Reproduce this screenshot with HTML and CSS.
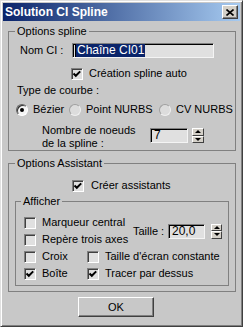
FILE: index.html
```html
<!DOCTYPE html>
<html lang="fr">
<head>
  <meta charset="UTF-8" />
  <title>Solution CI Spline</title>
  <link rel="stylesheet" href="styles.css">
</head>
<body>
  <div class="window">
    <div class="titlebar">
      <span class="title">Solution CI Spline</span>
      <span class="close">
        <svg width="8" height="7" viewBox="0 0 8 7"><path d="M0.5 0.5 L7.5 6.5 M7.5 0.5 L0.5 6.5" stroke="#000" stroke-width="1.6" fill="none"/></svg>
      </span>
    </div>

    <div class="client">
      <fieldset class="group g-spline">
        <legend>Options spline</legend>
        <div class="row row-name">
          <span class="name-label">Nom CI :</span>
          <div class="field field-name"><span class="sel">Chaîne CI01</span></div>
        </div>
        <div class="row checkrow row-auto">
          <span class="check"><svg width="10" height="10" viewBox="0 0 10 10"><path d="M1.5 4.5 L3.8 6.8 L8.2 2.4" stroke="#000" stroke-width="2" fill="none"/></svg></span>
          <span>Création spline auto</span>
        </div>
        <div class="row row-type">Type de courbe :</div>
        <div class="row row-radios">
          <span class="opt opt-bezier"><span class="radio on"></span>Bézier</span>
          <span class="opt opt-point"><span class="radio"></span>Point NURBS</span>
          <span class="opt"><span class="radio"></span>CV NURBS</span>
        </div>
        <div class="row row-knots">
          <span class="knots-label">Nombre de noeuds<br>de la spline :</span>
          <div class="field field-num">7</div>
          <div class="spin"><span class="up"></span><span class="down"></span></div>
        </div>
      </fieldset>

      <fieldset class="group g-assist">
        <legend>Options Assistant</legend>
        <div class="row checkrow row-create">
          <span class="check"><svg width="10" height="10" viewBox="0 0 10 10"><path d="M1.5 4.5 L3.8 6.8 L8.2 2.4" stroke="#000" stroke-width="2" fill="none"/></svg></span>
          <span>Créer assistants</span>
        </div>

        <fieldset class="group g-show">
          <legend>Afficher</legend>
          <div class="show-top">
            <div class="show-col">
              <div class="row checkrow"><span class="check"></span><span>Marqueur central</span></div>
              <div class="row checkrow"><span class="check"></span><span>Repère trois axes</span></div>
            </div>
            <div class="size">
              <span class="size-label">Taille :</span>
              <div class="field field-size">20,0</div>
              <div class="spin"><span class="up"></span><span class="down"></span></div>
            </div>
          </div>
          <div class="show-grid">
            <div class="row checkrow"><span class="check"></span><span>Croix</span></div>
            <div class="row checkrow"><span class="check"></span><span>Taille d'écran constante</span></div>
            <div class="row checkrow">
              <span class="check"><svg width="10" height="10" viewBox="0 0 10 10"><path d="M1.5 4.5 L3.8 6.8 L8.2 2.4" stroke="#000" stroke-width="2" fill="none"/></svg></span>
              <span>Boîte</span>
            </div>
            <div class="row checkrow">
              <span class="check"><svg width="10" height="10" viewBox="0 0 10 10"><path d="M1.5 4.5 L3.8 6.8 L8.2 2.4" stroke="#000" stroke-width="2" fill="none"/></svg></span>
              <span>Tracer par dessus</span>
            </div>
          </div>
        </fieldset>
      </fieldset>

      <div class="actions">
        <button class="btn">OK</button>
      </div>
    </div>
  </div>
</body>
</html>
```

FILE: styles.css
```css
* {
  box-sizing: border-box;
}

body {
  margin: 0;
  background-color: #c8c8c8;
  font-family: "Liberation Sans", Arial, sans-serif;
  font-size: 11px;
  line-height: 13px;
  color: #000;
}

.window {
  width: 243px;
  height: 327px;
  background-color: #c8c8c8;
  border: 1px solid;
  border-color: #e0e0e0 #404040 #404040 #e0e0e0;
  box-shadow: inset 1px 1px #fff, inset -1px -1px #808080;
  padding: 2px;
}

.titlebar {
  height: 18px;
  display: flex;
  align-items: center;
  padding-left: 2px;
  background: linear-gradient(to right, #0a246a, #a6caf0);
}

.title {
  color: #fff;
  font-weight: bold;
  font-size: 12px;
}

.close {
  margin-left: auto;
  margin-right: 2px;
  width: 16px;
  height: 14px;
  display: flex;
  align-items: center;
  justify-content: center;
  background-color: #d4d0c8;
  border: 1px solid;
  border-color: #fff #404040 #404040 #fff;
  box-shadow: inset -1px -1px #808080;
}

/* group boxes */
.group {
  margin: 0;
  padding: 0;
  min-width: 0;
  border: 1px solid #808080;
}

.group legend {
  padding: 0 2px;
  margin-left: 6px;
  line-height: 13px;
}

.g-spline {
  width: 228px;
  margin: 4px 0 0 5px;
}

.g-assist {
  width: 228px;
  margin: 6px 0 0 5px;
}

.g-show {
  width: 214px;
  margin: 3px 0 5px 6px;
  padding: 8px 0 5px 0;
}

.g-show legend {
  margin-left: 5px;
}

.row {
  display: flex;
  align-items: center;
  height: 13px;
  white-space: nowrap;
}

.checkrow {
  gap: 6px;
}

.row-name {
  margin-top: 5px;
  height: 15px;
  padding-left: 11px;
}

.name-label {
  width: 52px;
}

.row-auto {
  margin-top: 9px;
  padding-left: 62px;
}

.row-type {
  margin-top: 4px;
  padding-left: 8px;
}

.row-radios {
  margin-top: 6px;
  padding-left: 7px;
}

.opt {
  display: flex;
  align-items: center;
  gap: 5px;
}

.opt-bezier {
  width: 53px;
}

.opt-point {
  width: 90px;
}

.row-knots {
  margin-top: 8px;
  height: 26px;
  align-items: flex-start;
  padding-left: 33px;
}

.knots-label {
  width: 108px;
}

.row-create {
  margin-top: 9px;
  padding-left: 63px;
  gap: 7px;
}

/* controls */
.check {
  width: 12px;
  height: 12px;
  flex: none;
  display: flex;
  align-items: center;
  justify-content: center;
  background-color: #e0e0e0;
  border: 1px solid;
  border-color: #808080 #fff #fff #808080;
  box-shadow: inset 1px 1px #404040;
}

.radio {
  width: 12px;
  height: 12px;
  flex: none;
  border-radius: 50%;
  background-color: #dcdcdc;
  border: 1px solid;
  border-color: #a0a0a0 #f0f0f0 #f0f0f0 #a0a0a0;
  display: flex;
  align-items: center;
  justify-content: center;
}

.radio.on {
  background-color: #f4f4f4;
  border-color: #606060 #fff #fff #606060;
  box-shadow: inset 1px 1px #303030;
}

.radio.on::after {
  content: "";
  width: 4px;
  height: 4px;
  border-radius: 50%;
  background-color: #000;
}

.field {
  height: 15px;
  padding: 0 3px;
  background-color: #e0e0e0;
  border: 1px solid;
  border-color: #808080 #f4f4f4 #f4f4f4 #808080;
  box-shadow: inset 1px 1px #000;
  line-height: 13px;
  font-size: 12px;
  white-space: nowrap;
}

.field-name {
  width: 142px;
  padding-left: 2px;
}

.sel {
  display: inline-block;
  padding: 0 1px;
  background-color: #0a246a;
  color: #fff;
  border-left: 1px solid #000;
}

.field-num {
  width: 38px;
  margin-top: 4px;
}

.spin {
  width: 12px;
  height: 15px;
  margin-top: 4px;
  margin-left: 4px;
  display: flex;
  flex-direction: column;
}

.spin span {
  flex: 1;
  display: flex;
  align-items: center;
  justify-content: center;
  background-color: #d4d0c8;
  border: 1px solid;
  border-color: #fff #404040 #404040 #fff;
}

.spin .up::after {
  content: "";
  border-left: 3px solid transparent;
  border-right: 3px solid transparent;
  border-bottom: 3px solid #000;
}

.spin .down::after {
  content: "";
  border-left: 3px solid transparent;
  border-right: 3px solid transparent;
  border-top: 3px solid #000;
}

.show-top {
  display: flex;
  padding-left: 8px;
}

.show-col {
  width: 109px;
  display: flex;
  flex-direction: column;
  gap: 4px;
}

.size {
  display: flex;
  align-items: center;
  align-self: center;
}

.size-label {
  width: 35px;
}

.field-size {
  width: 37px;
}

.size .spin {
  width: 11px;
  margin: 0 0 0 6px;
}

.show-grid {
  display: grid;
  grid-template-columns: 63px auto;
  row-gap: 4px;
  margin-top: 4px;
  padding-left: 8px;
}

.actions {
  margin-top: 5px;
  padding-left: 75px;
}

.btn {
  width: 76px;
  height: 20px;
  padding: 0;
  font-family: inherit;
  font-size: 11px;
  color: #000;
  background-color: #c8c8c8;
  border: 1px solid;
  border-color: #fff #404040 #404040 #fff;
  box-shadow: inset -1px -1px #808080;
}
```
